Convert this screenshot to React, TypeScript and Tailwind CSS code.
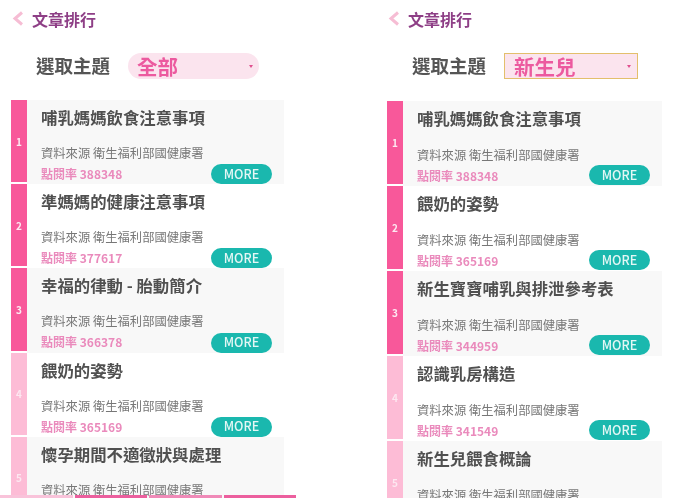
import React from 'react';

interface Article {
  title: string;
  clicks: number;
}

const allTopics: Article[] = [
  { title: '哺乳媽媽飲食注意事項', clicks: 388348 },
  { title: '準媽媽的健康注意事項', clicks: 377617 },
  { title: '幸福的律動 - 胎動簡介', clicks: 366378 },
  { title: '餵奶的姿勢', clicks: 365169 },
  { title: '懷孕期間不適徵狀與處理', clicks: 0 },
];

const newborn: Article[] = [
  { title: '哺乳媽媽飲食注意事項', clicks: 388348 },
  { title: '餵奶的姿勢', clicks: 365169 },
  { title: '新生寶寶哺乳與排泄參考表', clicks: 344959 },
  { title: '認識乳房構造', clicks: 341549 },
  { title: '新生兒餵食概論', clicks: 0 },
];

const Row = ({ article, rank, tall }: { article: Article; rank: number; tall?: boolean }) => (
  <div className={`flex ${tall ? 'h-[85px]' : 'h-[84.2px]'} ${rank % 2 === 1 ? 'bg-[#f8f8f8]' : 'bg-white'}`}>
    <div
      className={`flex w-[16px] shrink-0 items-center justify-center border-b-2 border-white text-[10px] font-bold text-[#fde8f1] ${
        rank <= 3 ? 'bg-[#f8589a]' : 'bg-[#fdbcd6]'
      }`}
    >
      {rank}
    </div>
    <div className="relative flex-1 pl-[14px]">
      <div className="mt-[5px] text-[16.4px] leading-[24px] font-semibold whitespace-nowrap text-[#505050]">{article.title}</div>
      <div className={`${tall ? 'mt-[18px]' : 'mt-[17px]'} text-[12.3px] leading-[14px] whitespace-nowrap text-[#777]`}>資料來源 衛生福利部國健康署</div>
      <div className="mt-[7px] text-[12px] leading-[14px] font-bold text-[#ea8abc]">
        點閱率 {article.clicks}
      </div>
      {article.clicks > 0 && (
        <button
          className={`absolute right-[12px] flex h-[20px] w-[61px] items-center justify-center rounded-full bg-[#1ab8ae] text-[12.5px] font-medium text-[#e4f7f5] ${
            tall ? 'bottom-[1px]' : 'bottom-0'
          }`}
        >
          MORE
        </button>
      )}
    </div>
  </div>
);

const Panel = ({
  articles,
  topic,
  boxed,
}: {
  articles: Article[];
  topic: string;
  boxed?: boolean;
}) => (
  <div className="h-[498px] w-[300px] overflow-hidden pl-[11px]">
    <div className="flex h-[37px] items-center gap-[8px] pl-[1px]">
      <svg width="12" height="15" viewBox="0 0 12 15" fill="none">
        <path d="M10 1.5 3 7.5l7 6" stroke="#f6bdd4" strokeWidth="3" />
      </svg>
      <span className="text-[16px] font-bold text-[#8e3f86]">文章排行</span>
    </div>
    <div className="mt-[16px] flex h-[26px] items-center pl-[25px]">
      <span className="w-[92px] text-[18.5px] font-semibold whitespace-nowrap text-[#555]">選取主題</span>
      <div
        className={`flex h-[26px] items-center justify-between pr-[5px] pl-[9px] text-[20.5px] font-semibold text-[#ec5a9f] ${
          boxed
            ? 'w-[134px] border border-[#e3bf6c] bg-[#fbe4ee]'
            : 'w-[131px] rounded-full bg-[#fbe4ee]'
        }`}
      >
        <span>{topic}</span>
        <span className="mr-[1px] h-0 w-0 border-x-[2.5px] border-t-[3.5px] border-x-transparent border-t-[#e0508f]" />
      </div>
    </div>
    <div className={`${boxed ? 'mt-[22px] w-[275px]' : 'mt-[21px] w-[273px]'}`}>
      {articles.map((article, i) => (
        <Row key={article.title} article={article} rank={i + 1} tall={boxed} />
      ))}
    </div>
  </div>
);

export default function App() {
  return (
    <div
      className="relative flex h-[498px] w-[676px] gap-[76px] overflow-hidden bg-white blur-[0.4px]"
      style={{ fontFamily: '"Noto Sans CJK TC", Roboto, sans-serif' }}
    >
      <Panel articles={allTopics} topic="全部" />
      <Panel articles={newborn} topic="新生兒" boxed />
      <div className="absolute bottom-0 left-0 flex h-[3px] w-[296px] gap-[2px]">
        <div className="flex-1 bg-[#f9c3da]" />
        <div className="flex-1 bg-[#ec5f9e]" />
        <div className="flex-1 bg-[#f08ab8]" />
        <div className="flex-1 bg-[#ec5f9e]" />
      </div>
    </div>
  );
}
